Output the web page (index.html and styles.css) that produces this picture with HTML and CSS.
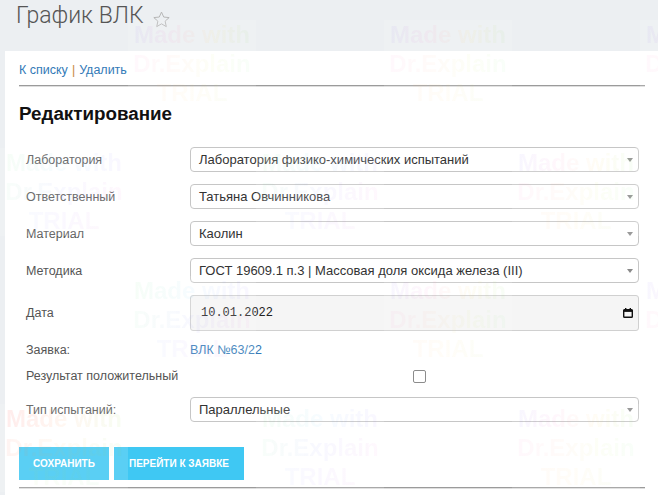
FILE: index.html
```html
<!DOCTYPE html>
<html lang="ru">
<head>
<meta charset="utf-8">
<title>График ВЛК</title>
<link rel="stylesheet" href="styles.css">
</head>
<body>
<header class="page-head">
  <h1 class="page-title">График ВЛК</h1>
  <svg class="star" viewBox="0 0 16 16" width="16" height="16" aria-hidden="true">
    <polygon points="8,1 10.1,5.7 15.2,6.2 11.4,9.6 12.5,14.7 8,12.1 3.5,14.7 4.6,9.6 0.8,6.2 5.9,5.7" fill="none" stroke="#b3b3b3" stroke-width="0.9" stroke-linejoin="round"/>
  </svg>
</header>
<main class="panel">
  <nav class="crumbs"><a href="#">К списку</a><span class="sep">|</span><a href="#">Удалить</a></nav>
  <div class="rule"></div>
  <h2 class="section-title">Редактирование</h2>
  <div class="form">
    <div class="row">
      <span class="label">Лаборатория</span>
      <div class="select">Лаборатория физико-химических испытаний<span class="caret"></span></div>
    </div>
    <div class="row">
      <span class="label">Ответственный</span>
      <div class="select">Татьяна Овчинникова<span class="caret"></span></div>
    </div>
    <div class="row">
      <span class="label">Материал</span>
      <div class="select">Каолин<span class="caret"></span></div>
    </div>
    <div class="row">
      <span class="label">Методика</span>
      <div class="select">ГОСТ 19609.1 п.3 | Массовая доля оксида железа (III)<span class="caret"></span></div>
    </div>
    <div class="row row-date">
      <span class="label">Дата</span>
      <div class="date">
        <span class="date-value">10.01.2022</span>
        <svg class="cal" viewBox="0 0 10 10" width="10" height="10" aria-hidden="true">
          <rect x="2" y="0" width="1.4" height="2" fill="#111"/>
          <rect x="6.6" y="0" width="1.4" height="2" fill="#111"/>
          <rect x="0.7" y="1.7" width="8.6" height="7.6" rx="0.8" fill="none" stroke="#111" stroke-width="1.4"/>
          <rect x="0.7" y="1.7" width="8.6" height="2.2" fill="#111"/>
        </svg>
      </div>
    </div>
    <div class="row row-text">
      <span class="label">Заявка:</span>
      <a class="link" href="#">ВЛК №63/22</a>
    </div>
    <div class="row row-check">
      <span class="label">Результат положительный</span>
      <div class="check-cell"><span class="checkbox"></span></div>
    </div>
    <div class="row">
      <span class="label">Тип испытаний:</span>
      <div class="select">Параллельные<span class="caret"></span></div>
    </div>
  </div>
  <div class="actions">
    <button class="btn btn-save" type="button">Сохранить</button>
    <button class="btn btn-go" type="button">Перейти к заявке</button>
  </div>
  <div class="rule rule-bottom"></div>
</main>

<div class="watermarks" aria-hidden="true">
  <div class="wm wm-1"><span class="l1">Made with</span><span class="l2">Dr.Explain</span><span class="l3">TRIAL</span></div>
  <div class="wm wm-2"><span class="l1">Made with</span><span class="l2">Dr.Explain</span><span class="l3">TRIAL</span></div>
  <div class="wm wm-3"><span class="l1">Made with</span><span class="l2">Dr.Explain</span><span class="l3">TRIAL</span></div>
  <div class="wm wm-4 alt"><span class="l1">Made with</span><span class="l2">Dr.Explain</span><span class="l3">TRIAL</span></div>
  <div class="wm wm-5 alt"><span class="l1">Made with</span><span class="l2">Dr.Explain</span><span class="l3">TRIAL</span></div>
  <div class="wm wm-6"><span class="l1">Made with</span><span class="l2">Dr.Explain</span><span class="l3">TRIAL</span></div>
  <div class="wm wm-7 alt"><span class="l1">Made with</span><span class="l2">Dr.Explain</span><span class="l3">TRIAL</span></div>
  <div class="wm wm-8"><span class="l1">Made with</span><span class="l2">Dr.Explain</span><span class="l3">TRIAL</span></div>
  <div class="wm wm-9"><span class="l1">Made with</span><span class="l2">Dr.Explain</span><span class="l3">TRIAL</span></div>
  <div class="wm wm-10 red"><span class="l1">Made with</span><span class="l2">Dr.Explain</span><span class="l3">TRIAL</span></div>
  <div class="wm wm-11 alt"><span class="l1">Made with</span><span class="l2">Dr.Explain</span><span class="l3">TRIAL</span></div>
  <div class="wm wm-12"><span class="l1">Made with</span><span class="l2">Dr.Explain</span><span class="l3">TRIAL</span></div>
</div>
</body>
</html>
```

FILE: styles.css
```css
* { box-sizing: border-box; }

html, body {
  margin: 0;
  height: 100%;
}

body {
  position: relative;
  overflow: hidden;
  background: #eceff2;
  font-family: "Liberation Sans", Arial, sans-serif;
  font-size: 12.5px;
  color: #333;
}

/* ---------- header ---------- */
.page-head {
  height: 51px;
  display: flex;
  align-items: flex-start;
  padding: 2px 0 0 16px;
}

.page-title {
  margin: 0;
  font-family: Roboto, "Open Sans", sans-serif;
  font-weight: 300;
  font-size: 23px;
  line-height: 28px;
  color: #555;
}

.star {
  margin: 9px 0 0 9px;
  width: 17px;
  height: 17px;
}

/* ---------- panel ---------- */
.panel {
  margin-left: 5px;
  min-height: calc(100vh - 51px);
  background: #fff;
  padding: 12px 13px 8px 14px;
}

.crumbs {
  font-size: 12.5px;
  line-height: 14px;
}

.crumbs a {
  color: #337ab7;
  text-decoration: none;
}

.sep {
  color: #c8893e;
  margin: 0 4px;
}

.rule {
  margin-top: 8px;
  height: 1px;
  background: #9b9b9b;
  box-shadow: 0 1px 0 #dedede;
}

.rule-bottom {
  margin-top: 7px;
}

.section-title {
  margin: 17px 0 22px;
  font-size: 18.8px;
  line-height: 22px;
  font-weight: bold;
  color: #111;
}

/* ---------- form ---------- */
.form {
  display: flex;
  flex-direction: column;
  gap: 12px;
}

.row {
  display: grid;
  grid-template-columns: 171px 449px;
  align-items: center;
  height: 25px;
}

.row-date { height: 36px; }
.row-text { height: 12px; }
.row-check { height: 18px; }

.label {
  padding-left: 7px;
  color: #555;
  line-height: 14px;
}

.select {
  position: relative;
  height: 25px;
  border: 1px solid #c6c6c6;
  border-radius: 4px;
  background: #fff;
  padding: 0 24px 0 8px;
  font-size: 13px;
  line-height: 23px;
  color: #333;
  white-space: nowrap;
  overflow: hidden;
}

.caret {
  position: absolute;
  right: 5px;
  top: 50%;
  margin-top: -2px;
  width: 0;
  height: 0;
  border-left: 3.5px solid transparent;
  border-right: 3.5px solid transparent;
  border-top: 4px solid #8a8a8a;
}

.date {
  height: 36px;
  border: 1px solid #d0d0d0;
  border-radius: 3px;
  background: #f5f5f5;
  display: flex;
  align-items: center;
  justify-content: space-between;
  padding: 0 5px 0 10px;
  font-family: "Liberation Mono", "DejaVu Sans Mono", monospace;
  font-size: 12px;
  color: #222;
}

.cal {
  width: 10px;
  height: 10px;
}

.link {
  color: #337ab7;
  text-decoration: none;
  line-height: 12px;
}

.check-cell {
  display: flex;
  align-items: center;
  padding-left: 223px;
}

.checkbox {
  width: 13px;
  height: 13px;
  border: 1px solid #8c8c8c;
  border-radius: 2px;
  background: #fff;
}

/* ---------- actions ---------- */
.actions {
  display: flex;
  gap: 5px;
  margin-top: 25px;
}

.btn {
  height: 33px;
  border: 0;
  background: #3fc8f3;
  color: #fff;
  font: bold 10px "Liberation Sans", Arial, sans-serif;
  text-transform: uppercase;
  padding: 0;
}

.btn-save { width: 90px; }
.btn-go { width: 130px; }

/* ---------- trial watermark overlay ---------- */
.watermarks {
  position: absolute;
  inset: 0;
  pointer-events: none;
}

.wm {
  position: absolute;
  width: 128px;
  height: 88px;
  background: rgba(255, 255, 255, 0.14);
  text-align: center;
  font: bold 24px/29px "Liberation Sans", Arial, sans-serif;
  white-space: nowrap;
}

.wm span {
  display: block;
  color: transparent;
  -webkit-background-clip: text;
  background-clip: text;
}

.wm .l1 { background-image: linear-gradient(90deg, rgba(110,110,255,.06), rgba(255,110,200,.06), rgba(255,220,110,.07), rgba(110,230,110,.06)); }
.wm .l2 { background-image: linear-gradient(90deg, rgba(255,110,210,.05), rgba(255,160,140,.05), rgba(220,240,110,.06), rgba(110,230,140,.05)); }
.wm .l3 { background-image: linear-gradient(90deg, rgba(255,150,110,.05), rgba(255,210,110,.05), rgba(140,230,110,.05)); }

.wm.alt .l1 { background-image: linear-gradient(90deg, rgba(110,230,110,.06), rgba(110,200,255,.06), rgba(160,110,255,.06)); }
.wm.alt .l2 { background-image: linear-gradient(90deg, rgba(110,230,140,.05), rgba(140,140,255,.06), rgba(255,110,210,.05)); }
.wm.alt .l3 { background-image: linear-gradient(90deg, rgba(110,200,255,.05), rgba(170,120,255,.05), rgba(255,120,180,.05)); }

.wm.red .l1 { background-image: linear-gradient(90deg, rgba(255,60,60,.10), rgba(255,150,80,.08), rgba(150,230,90,.08)); }
.wm.red .l2 { background-image: linear-gradient(90deg, rgba(255,90,70,.07), rgba(255,190,90,.06), rgba(120,220,110,.06)); }
.wm.red .l3 { background-image: linear-gradient(90deg, rgba(200,230,100,.06), rgba(110,220,160,.06)); }

.wm-1  { left: 128px; top: 20px; }
.wm-2  { left: 384px; top: 20px; }
.wm-3  { left: 640px; top: 20px; }
.wm-4  { left: 0;     top: 148px; }
.wm-5  { left: 256px; top: 148px; }
.wm-6  { left: 512px; top: 148px; }
.wm-7  { left: 128px; top: 276px; }
.wm-8  { left: 384px; top: 276px; }
.wm-9  { left: 640px; top: 276px; }
.wm-10 { left: 0;     top: 404px; }
.wm-11 { left: 256px; top: 404px; }
.wm-12 { left: 512px; top: 404px; }
```
